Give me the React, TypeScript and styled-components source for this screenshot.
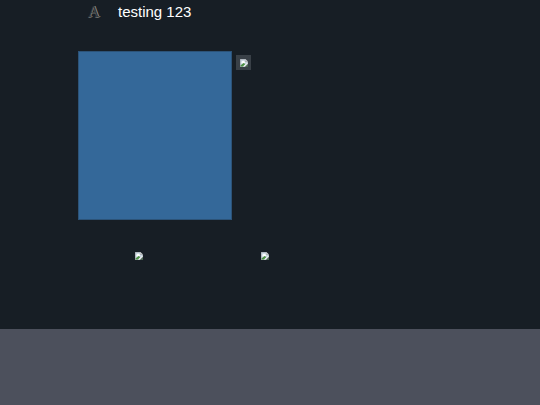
import React from "react";
import styled, { createGlobalStyle } from "styled-components";

const GlobalStyle = createGlobalStyle`
  * { box-sizing: border-box; }
  body {
    margin: 0;
    background: #171e25;
    color: #fff;
    font-family: "Liberation Sans", Arial, sans-serif;
  }
`;

const Page = styled.div`
  display: flex;
  flex-direction: column;
  min-height: 100vh;
`;

const Header = styled.header`
  display: flex;
  align-items: center;
  gap: 18px;
  height: 24px;
  padding: 0 88px;
`;

const Logo = styled.span`
  width: 12px;
  font-family: "Liberation Serif", serif;
  font-size: 16px;
  font-weight: 400;
  line-height: 24px;
  color: #303336;
  text-shadow: 1px 0 0 #8c8b86, 0 1px 0 #6b6d6a;
`;

const Title = styled.h1`
  margin: 0;
  font-size: 15px;
  line-height: 24px;
  font-weight: 400;
`;

const Main = styled.main`
  flex: 1;
  padding: 27px 78px 0;
`;

const Feature = styled.section`
  display: flex;
  align-items: flex-start;
  gap: 4px;
`;

const Panel = styled.div`
  width: 154px;
  height: 169px;
  background: #346899;
  border: 1px solid #2c5378;
`;

const Thumbnail = styled.div`
  display: flex;
  margin-top: 4px;
  padding: 4px 3px 3px 4px;
  background: #394047;
`;

const Gallery = styled.div`
  display: flex;
  gap: 118px;
  padding: 32px 57px 0;
`;

const Footer = styled.footer`
  height: 76px;
  background: #4c505c;
`;

const Picture = styled.svg`
  display: block;
  width: 8px;
  height: 8px;
`;

function MissingPicture() {
  return (
    <Picture viewBox="0 0 16 16" role="img" aria-label="Missing picture">
      <path d="M0 0h11l5 5v11H0z" fill="#9a9fa2" />
      <path d="M1 1h9v5h5v3L10 15H1z" fill="#c9d6e2" />
      <path d="M3 7c0-4 6-5 7 0v2H3z" fill="#fff" />
      <path d="M1 15V13l6-5 4 2-5 5z" fill="#4d9146" />
      <path d="M10 0l6 5h-6z" fill="#c5c9ca" />
      <path d="M15 7v2l-6 6H6z" fill="#f1f3f2" />
      <path d="M16 10v6h-6z" fill="#4b6651" />
    </Picture>
  );
}

export default function App() {
  return (
    <Page>
      <GlobalStyle />
      <Header>
        <Logo>A</Logo>
        <Title>testing 123</Title>
      </Header>
      <Main>
        <Feature>
          <Panel />
          <Thumbnail>
            <MissingPicture />
          </Thumbnail>
        </Feature>
        <Gallery>
          <MissingPicture />
          <MissingPicture />
        </Gallery>
      </Main>
      <Footer />
    </Page>
  );
}
